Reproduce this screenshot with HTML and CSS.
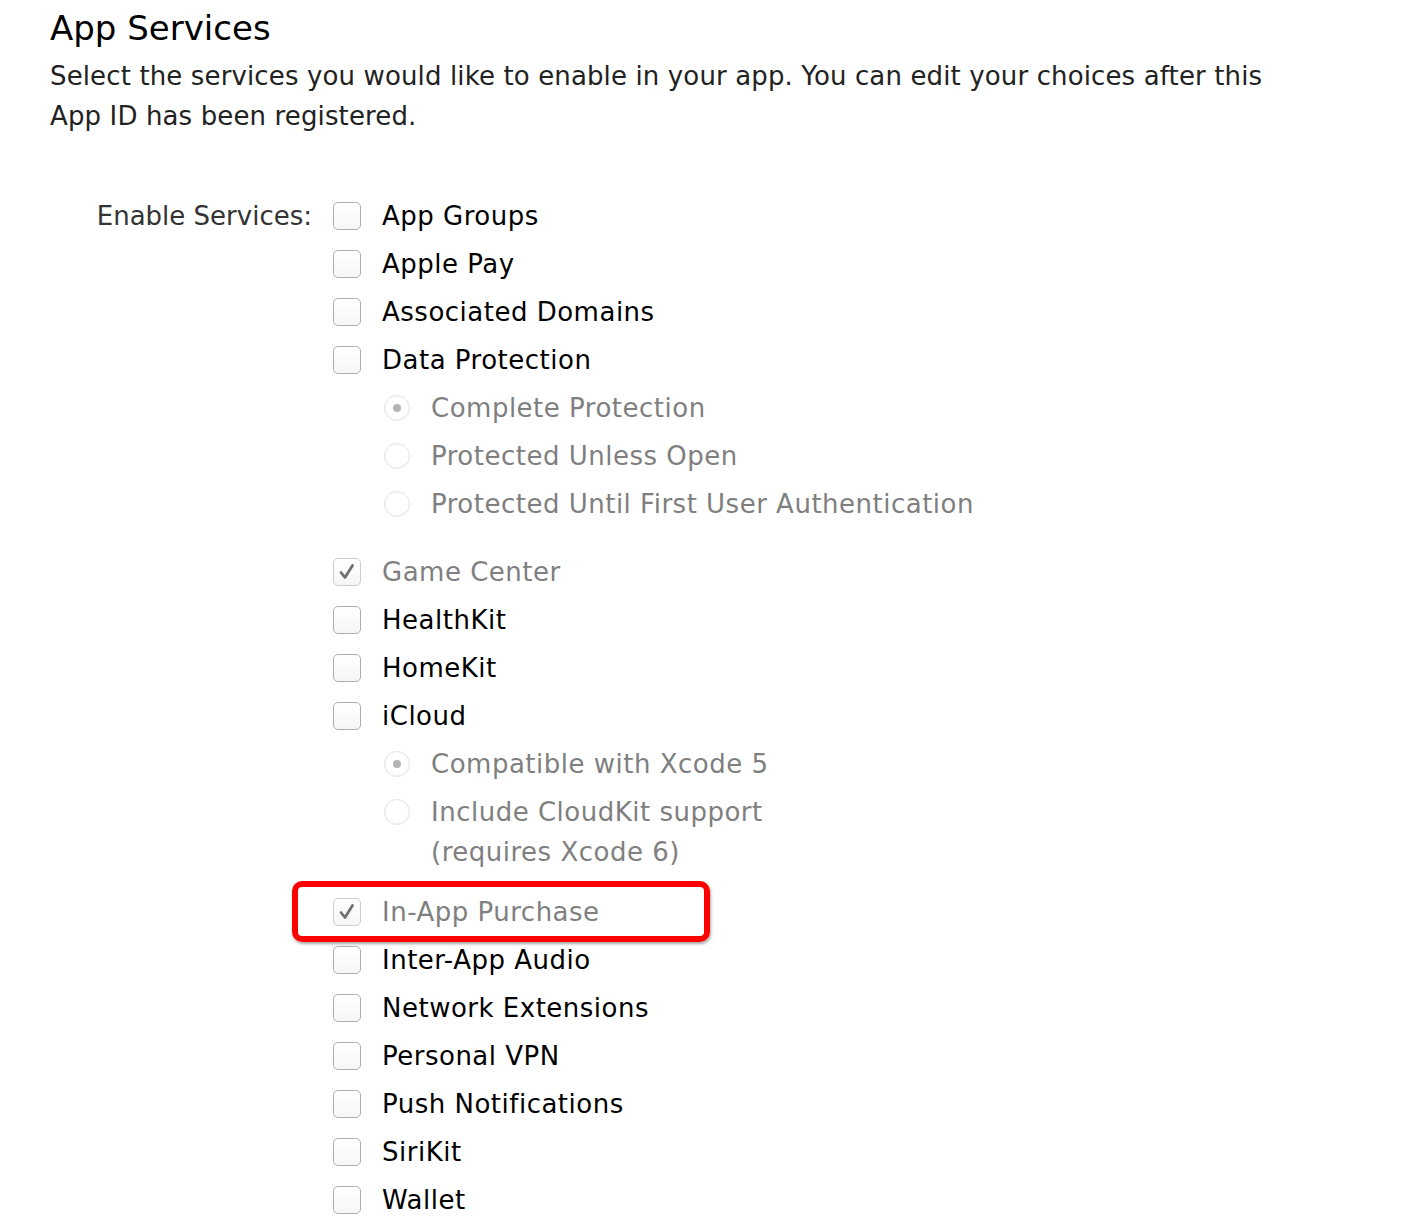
FILE: index.html
```html
<!DOCTYPE html>
<html lang="en">
<head>
<meta charset="utf-8">
<title>App Services</title>
<link rel="stylesheet" href="styles.css">
</head>
<body>
<div class="page">
  <h1 class="title">App Services</h1>
  <p class="intro">Select the services you would like to enable in your app. You can edit your choices after this App ID has been registered.</p>

  <div class="form">
    <div class="form-label">Enable Services:</div>
    <div class="services">
      <div class="row"><span class="cb"></span><span class="lbl">App Groups</span></div>
      <div class="row"><span class="cb"></span><span class="lbl">Apple Pay</span></div>
      <div class="row"><span class="cb"></span><span class="lbl">Associated Domains</span></div>
      <div class="row"><span class="cb"></span><span class="lbl">Data Protection</span></div>
      <div class="sub sub-gap-lg">
        <div class="row"><span class="radio on"></span><span class="lbl dim">Complete Protection</span></div>
        <div class="row"><span class="radio"></span><span class="lbl dim">Protected Unless Open</span></div>
        <div class="row"><span class="radio"></span><span class="lbl dim">Protected Until First User Authentication</span></div>
      </div>
      <div class="row"><span class="cb checked"><svg viewBox="0 0 26 26" class="tick"><path d="M7 13.5 L11 18.5 L18.5 6.5"/></svg></span><span class="lbl dim">Game Center</span></div>
      <div class="row"><span class="cb"></span><span class="lbl">HealthKit</span></div>
      <div class="row"><span class="cb"></span><span class="lbl">HomeKit</span></div>
      <div class="row"><span class="cb"></span><span class="lbl">iCloud</span></div>
      <div class="sub sub-gap-sm">
        <div class="row"><span class="radio on"></span><span class="lbl dim">Compatible with Xcode 5</span></div>
        <div class="row"><span class="radio"></span><span class="lbl dim">Include CloudKit support<br>(requires Xcode 6)</span></div>
      </div>
      <div class="row highlighted"><span class="cb checked"><svg viewBox="0 0 26 26" class="tick"><path d="M7 13.5 L11 18.5 L18.5 6.5"/></svg></span><span class="lbl dim">In-App Purchase</span><span class="callout"></span></div>
      <div class="row"><span class="cb"></span><span class="lbl">Inter-App Audio</span></div>
      <div class="row"><span class="cb"></span><span class="lbl">Network Extensions</span></div>
      <div class="row"><span class="cb"></span><span class="lbl">Personal VPN</span></div>
      <div class="row"><span class="cb"></span><span class="lbl">Push Notifications</span></div>
      <div class="row"><span class="cb"></span><span class="lbl">SiriKit</span></div>
      <div class="row"><span class="cb"></span><span class="lbl">Wallet</span></div>
    </div>
  </div>
</div>
</body>
</html>
```

FILE: styles.css
```css
html, body {
  margin: 0;
  padding: 0;
  background: #ffffff;
}

body {
  font-family: "DejaVu Sans", "Lucida Grande", Verdana, sans-serif;
  color: #000;
}

.page {
  padding-left: 50px;
  height: 1216px;
  overflow: hidden;
}

.title {
  margin: 8px 0 0;
  font-size: 34px;
  font-weight: normal;
  line-height: 40px;
  color: #000;
}

.intro {
  margin: 8px 0 0;
  width: 1250px;
  font-size: 26px;
  line-height: 40px;
  letter-spacing: 0.13px;
  color: #222;
}

.form {
  display: flex;
  margin-top: 56px;
  font-size: 26px;
}

.form-label {
  width: 262px;
  flex: none;
  text-align: right;
  line-height: 48px;
  color: #333;
}

.services {
  margin-left: 21px;
  display: flex;
  flex-direction: column;
  letter-spacing: 0.5px;
}

.row {
  position: relative;
  display: flex;
  align-items: flex-start;
  padding: 4px 0;
}

.lbl {
  line-height: 40px;
  margin-left: 21px;
  color: #000;
}

.lbl.dim {
  color: #7f7f7f;
}

.cb {
  flex: none;
  width: 28px;
  height: 28px;
  margin-top: 6px;
  box-sizing: border-box;
  border: 1px solid #adadad;
  border-radius: 5px;
  background: linear-gradient(#ffffff, #f6f6f6);
  box-shadow: inset 0 1px 0 #fff;
}

.cb.checked {
  border-color: #cdcdcd;
}

.tick {
  display: block;
  width: 26px;
  height: 26px;
}

.tick path {
  fill: none;
  stroke: #707070;
  stroke-width: 2.8;
  stroke-linecap: round;
  stroke-linejoin: round;
}

.sub {
  padding-left: 51px;
}

.sub-gap-lg {
  margin-bottom: 20px;
}

.sub-gap-sm {
  margin-bottom: 12px;
}

.radio {
  flex: none;
  position: relative;
  width: 26px;
  height: 26px;
  margin-top: 7px;
  box-sizing: border-box;
  border: 1px solid #e2e2e2;
  border-radius: 50%;
  background: radial-gradient(circle at 50% 40%, #ffffff 55%, #f1f1f1 100%);
}

.radio.on::after {
  content: "";
  position: absolute;
  left: 8px;
  top: 8px;
  width: 8px;
  height: 8px;
  border-radius: 50%;
  background: #b4b4b4;
}

.callout {
  position: absolute;
  left: -41px;
  top: -7px;
  width: 418px;
  height: 61px;
  box-sizing: border-box;
  border: 6px solid #ff0000;
  border-radius: 10px;
  box-shadow: 1px 2px 3px rgba(0, 0, 0, 0.35);
  pointer-events: none;
}
```
